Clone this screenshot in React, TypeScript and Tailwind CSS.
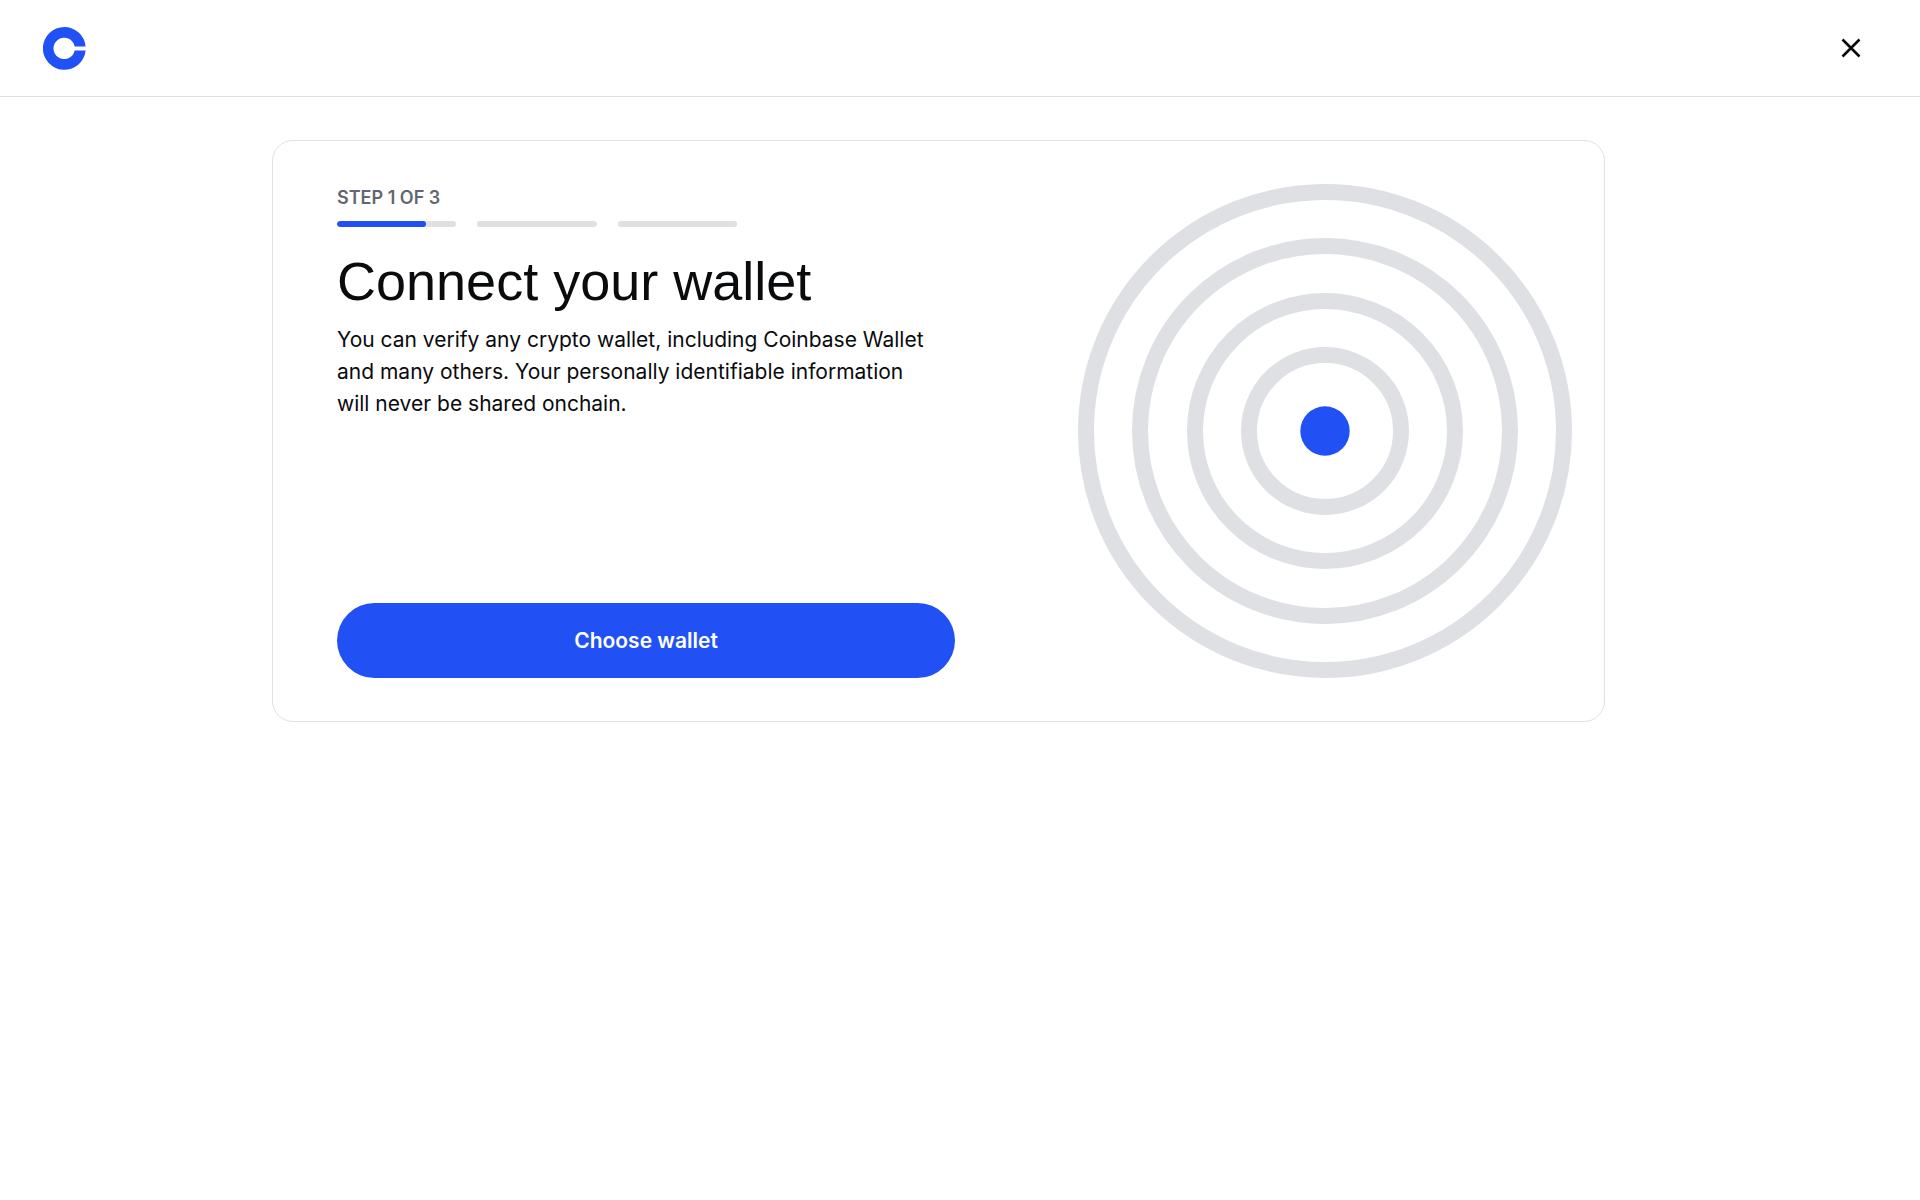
import React from 'react';

const TOTAL_STEPS = 3;
const RINGS = [239, 185, 130, 76];

function Logo() {
  return (
    <svg viewBox="0 0 43 43" className="size-[43px]" aria-hidden="true">
      <path
        fill="#2151f5"
        d="M21.3 0a21.4 21.4 0 1 0 21.3 23.4H31.7a10.7 10.7 0 1 1 0-4H42.6A21.4 21.4 0 0 0 21.3 0Z"
      />
    </svg>
  );
}

function StepProgress({ step, progress }: { step: number; progress: number }) {
  return (
    <div>
      <p className="text-[18px] leading-7 font-semibold text-[#636671]">
        STEP {step} OF {TOTAL_STEPS}
      </p>
      <div className="mt-[9px] flex max-w-[400px] gap-[21px]">
        {Array.from({ length: TOTAL_STEPS }, (_, i) => (
          <div key={i} className="h-[6px] flex-1 overflow-hidden rounded-full bg-[#dfe0e2]">
            {i === step - 1 && (
              <div className="h-full rounded-full bg-[#2151f5]" style={{ width: `${progress}%` }} />
            )}
          </div>
        ))}
      </div>
    </div>
  );
}

function Target() {
  return (
    <svg viewBox="0 0 494 494" className="w-full max-w-[494px] shrink-0" aria-hidden="true">
      {RINGS.map((r) => (
        <circle key={r} cx="247" cy="247" r={r} fill="none" stroke="#dee0e3" strokeWidth="16" />
      ))}
      <circle cx="247" cy="247" r="24.7" fill="#2151f5" />
    </svg>
  );
}

export default function App() {
  return (
    <div className="min-h-screen bg-white text-[#0a0b0d] font-['Inter',sans-serif]">
      <header className="flex h-[97px] items-center justify-between border-b border-[#dedfe2] pl-[43px] pr-[53px]">
        <a href="#" aria-label="Home">
          <Logo />
        </a>
        <button type="button" aria-label="Close" className="flex size-8 items-center justify-center">
          <svg viewBox="0 0 20 20" className="size-5" aria-hidden="true">
            <path d="M1.5 1.5l17 17M18.5 1.5l-17 17" stroke="#0a0b0d" strokeWidth="2.6" />
          </svg>
        </button>
      </header>

      <main className="pt-[43px] pl-6 pr-[67px]">
        <section className="mx-auto flex max-w-[1333px] items-stretch justify-between gap-10 rounded-[21px] border border-[#dfe1e4] py-[43px] pl-16 pr-8">
          <div className="flex w-full max-w-[618px] flex-col">
            <StepProgress step={1} progress={75} />
            <h1 className="mt-6 font-['Liberation_Sans',sans-serif] text-[54px] leading-[60px]">
              Connect your wallet
            </h1>
            <p className="mt-[13px] max-w-[600px] text-[21px] leading-8">
              You can verify any crypto wallet, including Coinbase Wallet and many others. Your personally
              identifiable information will never be shared onchain.
            </p>
            <button
              type="button"
              className="mt-auto h-[75px] w-full rounded-full bg-[#2151f5] text-[21px] font-semibold text-white"
            >
              Choose wallet
            </button>
          </div>
          <Target />
        </section>
      </main>
    </div>
  );
}
